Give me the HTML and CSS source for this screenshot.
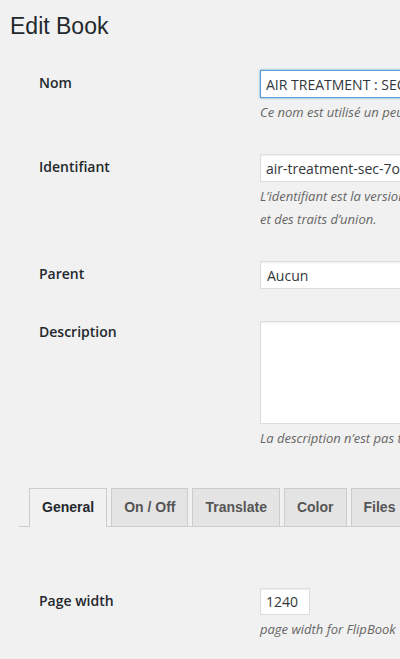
FILE: index.html
```html
<!DOCTYPE html>
<html lang="fr">
<head>
  <meta charset="UTF-8">
  <meta name="viewport" content="width=device-width, initial-scale=1.0">
  <title>Edit Book</title>
  <link rel="stylesheet" href="styles.css">
</head>
<body>
  <div class="wrap">
    <h1 class="page-title">Edit Book</h1>

    <form class="edit-form">
      <div class="form-row">
        <label class="row-label" for="name">Nom</label>
        <div class="row-field">
          <input id="name" class="text-input is-focused" type="text" value="AIR TREATMENT : SEC 7OO">
          <p class="description">Ce nom est utilisé un peu partout sur votre site.</p>
        </div>
      </div>

      <div class="form-row">
        <label class="row-label" for="slug">Identifiant</label>
        <div class="row-field">
          <input id="slug" class="text-input" type="text" value="air-treatment-sec-7oo">
          <p class="description">L’identifiant est la version normalisée du nom. Il ne contient généralement que des lettres minuscules non accentuées, des chiffres<br>et des traits d’union.</p>
        </div>
      </div>

      <div class="form-row">
        <label class="row-label" for="parent">Parent</label>
        <div class="row-field">
          <select id="parent" class="select-input">
            <option>Aucun</option>
          </select>
        </div>
      </div>

      <div class="form-row">
        <label class="row-label" for="description">Description</label>
        <div class="row-field">
          <textarea id="description" class="text-area"></textarea>
          <p class="description">La description n’est pas très utilisée par défaut.</p>
        </div>
      </div>

      <div class="tabs">
        <span class="tab is-active">General</span>
        <span class="tab">On / Off</span>
        <span class="tab">Translate</span>
        <span class="tab">Color</span>
        <span class="tab">Files</span>
        <span class="tab">Layout</span>
      </div>

      <div class="tab-panel">
        <div class="form-row">
          <label class="row-label" for="page-width">Page width</label>
          <div class="row-field">
            <input id="page-width" class="text-input small-input" type="text" value="1240">
            <p class="description">page width for FlipBook</p>
          </div>
        </div>
      </div>
    </form>
  </div>
</body>
</html>
```

FILE: styles.css
```css
body, html {
  margin: 0;
  padding: 0;
  background-color: #f1f1f1;
  color: #23282d;
  font-family: 'Open Sans', 'Noto Sans', sans-serif;
  overflow: hidden;
}

.wrap {
  padding-left: 10px;
}

.page-title {
  margin: 0;
  padding-top: 12px;
  font-family: 'Liberation Sans', Arial, sans-serif;
  font-size: 23px;
  font-weight: 400;
  line-height: 29px;
}

.edit-form {
  margin-top: 14px;
}

.form-row {
  display: flex;
  padding: 15px 0;
}

.row-label {
  flex: 0 0 250px;
  padding-left: 29px;
  padding-top: 3px;
  box-sizing: border-box;
  font-size: 14px;
  font-weight: 600;
  line-height: 20px;
}

.row-field {
  flex: 0 0 auto;
  width: 400px;
}

.text-input,
.select-input {
  display: block;
  box-sizing: border-box;
  width: 400px;
  height: 28px;
  margin: 0;
  padding: 3px 5px;
  border: 1px solid #ddd;
  background-color: #fff;
  box-shadow: inset 0 1px 2px rgba(0, 0, 0, 0.07);
  font-family: 'Open Sans', 'Noto Sans', sans-serif;
  font-size: 14px;
  color: #32373c;
  outline: none;
}

.text-input.is-focused {
  border-color: #5b9dd9;
  box-shadow: 0 0 2px rgba(30, 140, 190, 0.8);
}

.select-input {
  padding: 2px 6px;
  appearance: none;
  -webkit-appearance: none;
  border-radius: 0;
}

.text-area {
  display: block;
  box-sizing: border-box;
  width: 400px;
  height: 103px;
  margin: 2px 0 0;
  border: 1px solid #ddd;
  background-color: #fff;
  box-shadow: inset 0 1px 2px rgba(0, 0, 0, 0.07);
  resize: none;
}

.small-input {
  width: 50px;
  height: 27px;
}

.description {
  margin: 3px 0 0;
  font-size: 13px;
  font-style: italic;
  line-height: 23px;
  color: #666;
  white-space: nowrap;
}

.tabs {
  display: flex;
  gap: 4px;
  margin: 23px 0 0 9px;
  padding-left: 10px;
  border-bottom: 1px solid #ccc;
}

.tab {
  padding: 8px 12px 9px;
  border: 1px solid #ccc;
  border-bottom: none;
  background-color: #e4e4e4;
  font-family: 'Liberation Sans', Arial, sans-serif;
  font-size: 14px;
  font-weight: 700;
  line-height: 20px;
  color: #555;
  white-space: nowrap;
}

.tab.is-active {
  position: relative;
  top: 1px;
  margin-top: -1px;
  background-color: #f1f1f1;
  color: #23282d;
}

.tab-panel {
  padding-top: 46px;
}
```
